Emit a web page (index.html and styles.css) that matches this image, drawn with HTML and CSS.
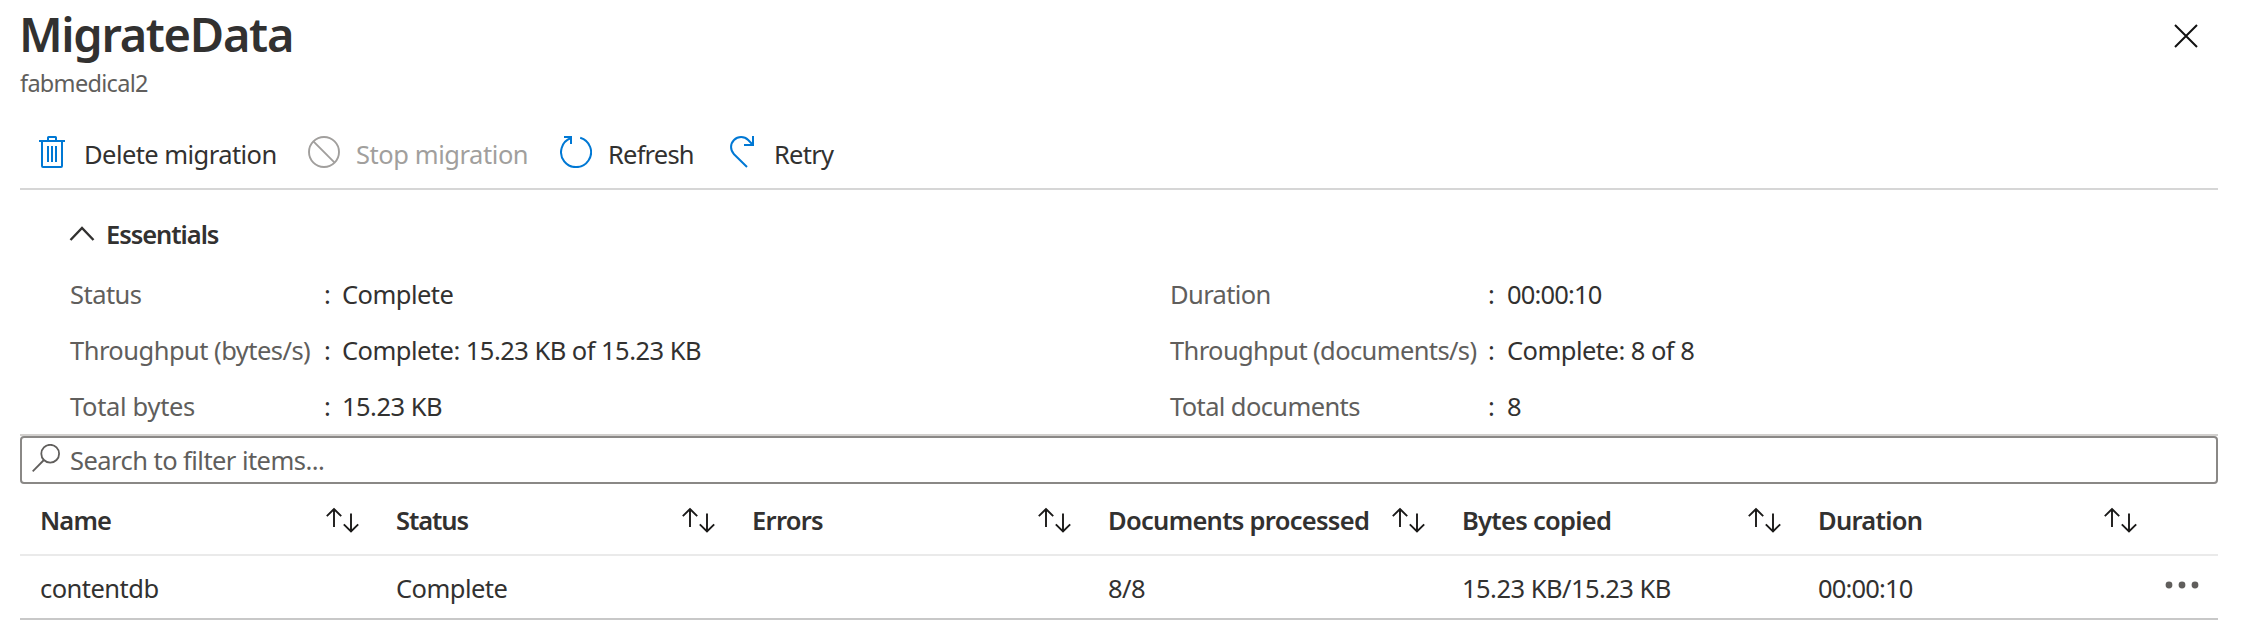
FILE: index.html
```html
<!DOCTYPE html>
<html lang="en">
<head>
<meta charset="utf-8">
<title>MigrateData</title>
<link rel="stylesheet" href="styles.css">
</head>
<body>
<svg class="defs" width="0" height="0">
  <symbol id="sort" viewBox="0 0 34 26"><path d="M9 20V2M1.800 9.200L9 2l7.200 7.200M26 6.500V24.500M18.800 17.300l7.200 7.200 7.200-7.200" fill="none" stroke="#1b1a19" stroke-width="1.900"/></symbol>
</svg>
<main class="blade">
  <header class="header">
    <div>
      <h1 class="title">MigrateData</h1>
      <p class="subtitle">fabmedical2</p>
    </div>
    <svg class="close" viewBox="0 0 24 24"><path d="M1 1L23 23M23 1L1 23" stroke="#111" stroke-width="2"/></svg>
  </header>
  <nav class="toolbar">
    <button class="command delete"><svg width="26" height="32" viewBox="0 0 26 32" fill="none" stroke="#0078d4" stroke-width="2"><path d="M0 5H26M9 5V1.500Q9 1 9.500 1H16.500Q17 1 17 1.500V5M3 5V30Q3 31 4 31H22Q23 31 23 30V5M9 10V26M13 10V26M17 10V26"/></svg><span>Delete migration</span></button>
    <button class="command stop"><svg width="32" height="32" viewBox="0 0 32 32" fill="none" stroke="#a19f9d" stroke-width="1.900"><circle cx="16" cy="16" r="15"/><path d="M5.400 5.400L26.600 26.600"/></svg><span>Stop migration</span></button>
    <button class="command refresh"><svg width="32" height="32" viewBox="0 0 32 32" fill="none" stroke="#0078d4" stroke-width="2"><path d="M20.200 1.700A15 15 0 1 1 11 2M4 1H11V8"/></svg><span>Refresh</span></button>
    <button class="command retry"><svg width="26" height="32" viewBox="0 0 26 32" fill="none" stroke="#0078d4" stroke-width="2"><path d="M17 31L4 18.200A10 10 0 0 1 18.200 4L23 9M23 0V9H14"/></svg><span>Retry</span></button>
  </nav>
  <section class="essentials">
    <h2 class="essentials-title"><svg width="26" height="16" viewBox="0 0 26 16"><path d="M1.500 14L13 2L24.500 14" fill="none" stroke="#323130" stroke-width="2.400"/></svg><span>Essentials</span></h2>
    <div class="facts">
      <dl class="fact-list">
        <dt>Status</dt><dd class="sep">:</dd><dd>Complete</dd>
        <dt>Throughput (bytes/s)</dt><dd class="sep">:</dd><dd>Complete: 15.23 KB of 15.23 KB</dd>
        <dt class="total">Total bytes</dt><dd class="sep">:</dd><dd>15.23 KB</dd>
      </dl>
      <dl class="fact-list documents">
        <dt>Duration</dt><dd class="sep">:</dd><dd class="time">00:00:10</dd>
        <dt>Throughput (documents/s)</dt><dd class="sep">:</dd><dd class="rate">Complete: 8 of 8</dd>
        <dt>Total documents</dt><dd class="sep">:</dd><dd>8</dd>
      </dl>
    </div>
  </section>
  <div class="search">
    <svg width="28" height="28" viewBox="0 0 28 28" fill="none" stroke="#605e5c" stroke-width="1.800"><circle cx="18.200" cy="9.700" r="8.900"/><path d="M11.900 16L0.700 27.300"/></svg>
    <span>Search to filter items...</span>
  </div>
  <div class="grid-row head">
    <div class="cell name"><span>Name</span><svg class="sort"><use href="#sort"/></svg></div>
    <div class="cell status"><span>Status</span><svg class="sort"><use href="#sort"/></svg></div>
    <div class="cell"><span>Errors</span><svg class="sort"><use href="#sort"/></svg></div>
    <div class="cell"><span>Documents processed</span><svg class="sort"><use href="#sort"/></svg></div>
    <div class="cell"><span>Bytes copied</span><svg class="sort"><use href="#sort"/></svg></div>
    <div class="cell"><span>Duration</span><svg class="sort"><use href="#sort"/></svg></div>
  </div>
  <div class="grid-row item">
    <div class="cell">contentdb</div>
    <div class="cell">Complete</div>
    <div class="cell"></div>
    <div class="cell">8/8</div>
    <div class="cell">15.23 KB/15.23 KB</div>
    <div class="cell time">00:00:10</div>
    <svg class="more" width="34" height="8" viewBox="0 0 34 8" fill="#605e5c"><circle cx="4" cy="4" r="3.400"/><circle cx="17" cy="4" r="3.400"/><circle cx="30" cy="4" r="3.400"/></svg>
  </div>
</main>
</body>
</html>
```
FILE: styles.css
```css
* { box-sizing: border-box; margin: 0; padding: 0; }
body {
  background: #fff;
  color: #323130;
  font: 25.5px/36px "Noto Sans", "Open Sans", sans-serif;
  letter-spacing: -0.53px;
  white-space: nowrap;
}
svg { flex: none; display: block; }
.defs { position: absolute; }
.blade { width: 2198px; margin-left: 20px; padding-top: 3px; }

.header { display: flex; justify-content: space-between; height: 96px; }
.title { font-size: 47px; line-height: 64px; font-weight: 600; letter-spacing: -1.3px; margin-left: -1px; margin-top: -1px; }
.subtitle { font-size: 23.5px; line-height: 32px; letter-spacing: -0.7px; padding-top: 1px; color: #605e5c; }
.close { width: 24px; height: 24px; margin: 21px 20px 0 0; }

.toolbar { display: flex; height: 91px; padding: 37px 0 0 19px; border-bottom: 2px solid #d6d6d6; }
.command { display: flex; align-items: flex-start; height: 36px; border: 0; background: none; color: inherit; font: inherit; letter-spacing: inherit; }
.delete { width: 269px; gap: 19px; letter-spacing: -0.56px; }
.stop { width: 252px; gap: 16px; color: #a19f9d; letter-spacing: -0.44px; }
.refresh { width: 170px; gap: 16px; letter-spacing: -0.8px; }
.retry { gap: 18px; letter-spacing: -0.76px; }

.essentials { height: 246px; padding: 26px 0 0 50px; border-bottom: 2px solid #d2d0ce; }
.essentials-title { display: flex; align-items: center; gap: 11px; height: 36px; margin-left: -1px; font-size: 25.5px; font-weight: 600; letter-spacing: -1.05px; }
.essentials-title svg { margin-top: -1px; }
.facts { display: flex; margin-top: 14px; }
.fact-list { display: grid; flex: none; grid-template-columns: 254px 18px auto; width: 1100px; grid-auto-rows: 56px; line-height: 56px; justify-content: start; }
.documents { grid-template-columns: 318px 19px auto; width: 900px; letter-spacing: -0.62px; }
.fact-list dt { color: #605e5c; }
.fact-list .total { letter-spacing: -0.32px; }
.fact-list .rate { letter-spacing: -0.53px; }
.time { letter-spacing: -0.85px; }

.search { display: flex; height: 48px; padding: 6px 10px; gap: 10px; border: 2px solid #8a8886; border-radius: 4px; color: #605e5c; letter-spacing: -0.55px; }
.search span { line-height: 34px; margin-top: -1px; }

.grid-row { display: grid; grid-template-columns: 356px 356px 356px 354px 356px auto; padding-left: 20px; align-items: center; }
.cell { display: flex; align-items: center; }
.head { height: 72px; padding-top: 2px; border-bottom: 2px solid #eaeaea; font-weight: 600; letter-spacing: -0.71px; }
.head .cell { justify-content: space-between; padding-right: 37px; }
.head .cell:last-child { width: 356px; }
.head .status { letter-spacing: -1.1px; }
.head .name { letter-spacing: -0.85px; }
.sort { width: 34px; height: 26px; }
.item { height: 64px; padding-top: 1px; border-bottom: 2px solid #c8c8c8; grid-template-columns: 356px 356px 356px 354px 356px 1fr auto; }
.more { margin: -5px 19px 0 0; }
```
